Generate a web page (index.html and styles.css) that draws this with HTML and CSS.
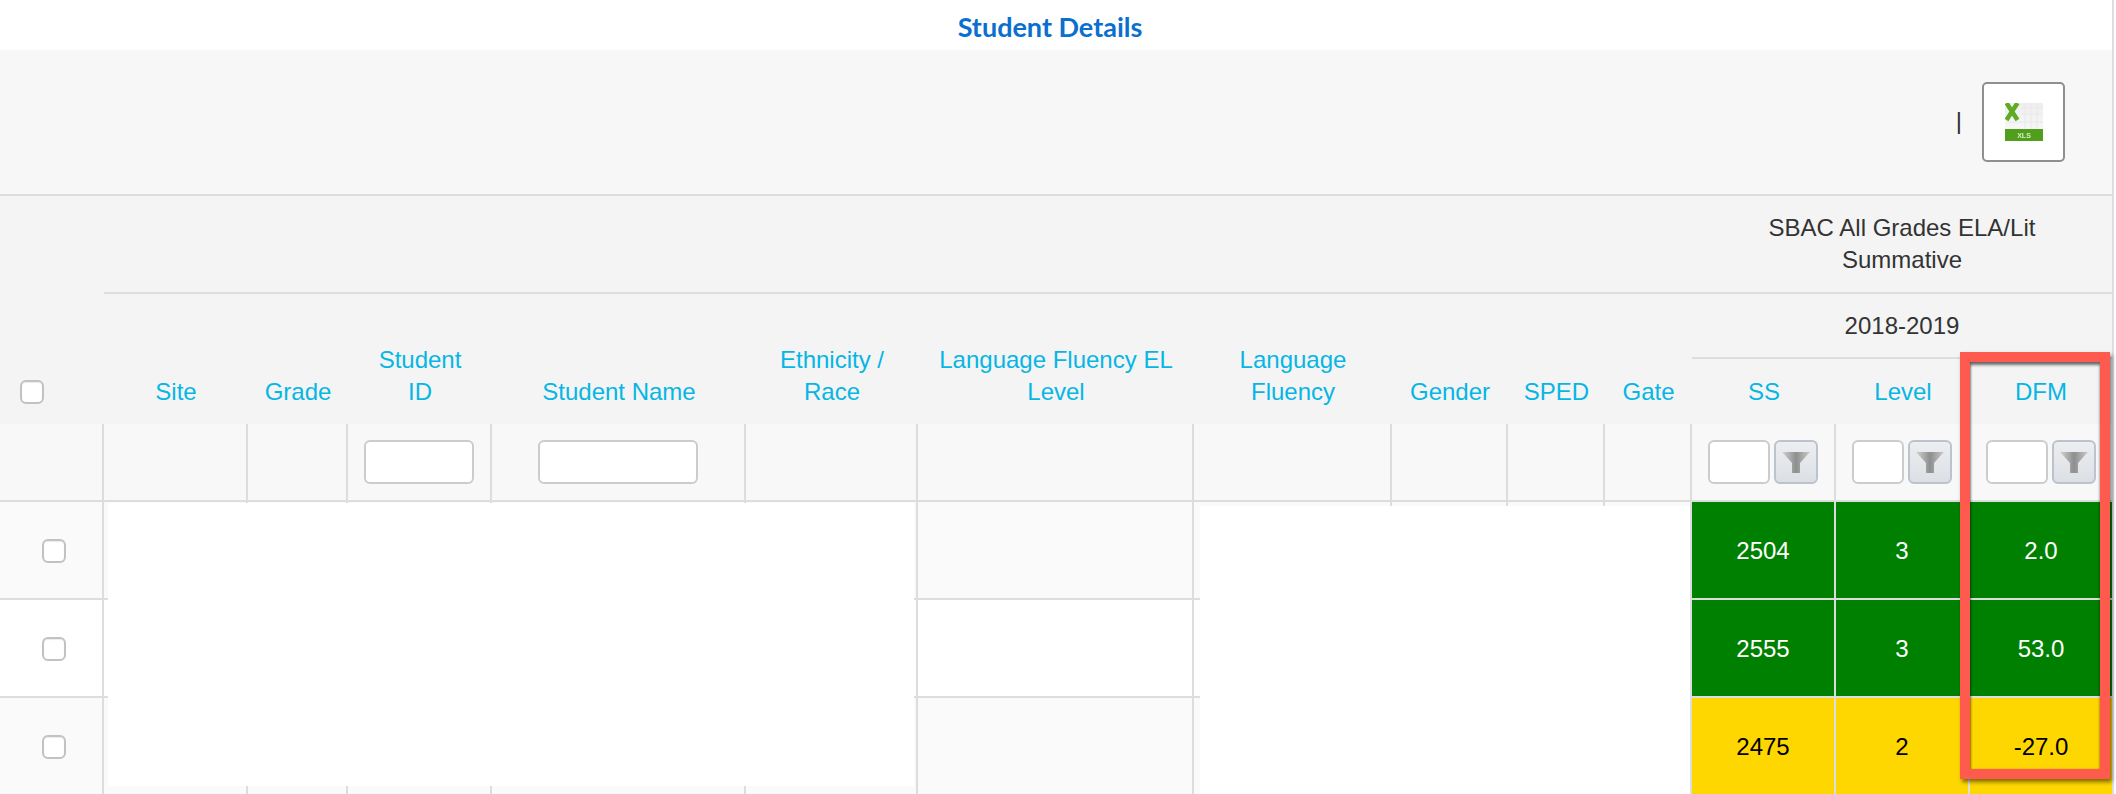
FILE: index.html
```html
<!DOCTYPE html>
<html lang="en">
<head>
<meta charset="utf-8">
<title>Student Details</title>
<link rel="stylesheet" href="styles.css">
</head>
<body>
<div class="page">
  <h1 class="title">Student Details</h1>
  <div class="toolbar">
    <span class="sep">|</span>
    <button class="export" type="button" aria-label="Export to Excel">
      <svg class="xls" width="38" height="38" viewBox="0 0 38 38">
        <defs>
          <linearGradient id="sheet" x1="0" y1="0" x2="0" y2="1">
            <stop offset="0" stop-color="#eeeeee"/>
            <stop offset="1" stop-color="#fbfbfb"/>
          </linearGradient>
        </defs>
        <rect width="38" height="38" fill="url(#sheet)"/>
        <path d="M16 5H38M16 11H38M2 19H38M20 0V26M26 0V26M32 0V26" stroke="#e8e8e8" stroke-width="1"/>
        <rect y="26" width="38" height="12" fill="#4f9e1c"/>
        <path d="M1.5 0L12.5 17M12.5 0L1.5 17" stroke="#5fac23" stroke-width="4.5" fill="none"/>
        <text x="19" y="35" class="xls-label">XLS</text>
      </svg>
    </button>
  </div>
  <table class="grid">
    <colgroup>
      <col class="c0"><col class="c1"><col class="c2"><col class="c3"><col class="c4"><col class="c5"><col class="c6">
      <col class="c7"><col class="c8"><col class="c9"><col class="c10"><col class="c11"><col class="c12"><col class="c13">
    </colgroup>
    <thead>
      <tr class="h-a">
        <th class="sel" rowspan="3"><input type="checkbox" class="check" aria-label="Select all"></th>
        <th class="blank" colspan="10"></th>
        <th class="group" colspan="3">SBAC All Grades ELA/Lit Summative</th>
      </tr>
      <tr class="h-b">
        <th class="col" rowspan="2">Site</th>
        <th class="col" rowspan="2">Grade</th>
        <th class="col" rowspan="2">Student<br>ID</th>
        <th class="col" rowspan="2">Student Name</th>
        <th class="col" rowspan="2">Ethnicity /<br>Race</th>
        <th class="col" rowspan="2">Language Fluency EL<br>Level</th>
        <th class="col" rowspan="2">Language<br>Fluency</th>
        <th class="col" rowspan="2">Gender</th>
        <th class="col" rowspan="2">SPED</th>
        <th class="col" rowspan="2">Gate</th>
        <th class="group" colspan="3">2018-2019</th>
      </tr>
      <tr class="h-c">
        <th class="col mid">SS</th>
        <th class="col mid">Level</th>
        <th class="col mid">DFM</th>
      </tr>
      <tr class="filters">
        <td></td><td></td><td></td>
        <td><input class="field" type="text" aria-label="Student ID filter"></td>
        <td><input class="field wide" type="text" aria-label="Student name filter"></td>
        <td></td><td></td><td></td><td></td><td></td><td></td>
        <td>
          <div class="filter">
            <input class="field ss" type="text" aria-label="SS filter">
            <button class="funnel" type="button" aria-label="Filter SS"><svg width="28" height="22" viewBox="0 0 28 22"><use href="#funnel"/></svg></button>
          </div>
        </td>
        <td>
          <div class="filter">
            <input class="field lv" type="text" aria-label="Level filter">
            <button class="funnel" type="button" aria-label="Filter Level"><svg width="28" height="22" viewBox="0 0 28 22"><use href="#funnel"/></svg></button>
          </div>
        </td>
        <td>
          <div class="filter">
            <input class="field ss" type="text" aria-label="DFM filter">
            <button class="funnel" type="button" aria-label="Filter DFM"><svg width="28" height="22" viewBox="0 0 28 22"><use href="#funnel"/></svg></button>
          </div>
        </td>
      </tr>
    </thead>
    <tbody>
      <tr>
        <td class="pick"><input type="checkbox" class="check" aria-label="Select row"></td>
        <td></td><td></td><td></td><td></td><td></td><td></td><td></td><td></td><td></td><td></td>
        <td class="num good">2504</td><td class="num good">3</td><td class="num good">2.0</td>
      </tr>
      <tr>
        <td class="pick"><input type="checkbox" class="check" aria-label="Select row"></td>
        <td></td><td></td><td></td><td></td><td></td><td></td><td></td><td></td><td></td><td></td>
        <td class="num good">2555</td><td class="num good">3</td><td class="num good">53.0</td>
      </tr>
      <tr>
        <td class="pick"><input type="checkbox" class="check" aria-label="Select row"></td>
        <td></td><td></td><td></td><td></td><td></td><td></td><td></td><td></td><td></td><td></td>
        <td class="num warn">2475</td><td class="num warn">2</td><td class="num warn">-27.0</td>
      </tr>
    </tbody>
  </table>
  <div class="mask mask-a"></div>
  <div class="mask mask-b"></div>
  <div class="callout"></div>
</div>
<svg class="defs" width="0" height="0">
  <defs>
    <linearGradient id="fg" x1="0" y1="0" x2="1" y2="0">
      <stop offset="0" stop-color="#d2d2d2"/>
      <stop offset="0.5" stop-color="#8e8e8e"/>
      <stop offset="1" stop-color="#cacaca"/>
    </linearGradient>
    <symbol id="funnel" viewBox="0 0 28 22">
      <polygon points="0,1 28,1 18,12 18,22 10,22 10,12" fill="url(#fg)"/>
    </symbol>
  </defs>
</svg>
</body>
</html>
```
FILE: styles.css
```css
html, body {
  margin: 0;
  padding: 0;
  background: #fff;
  height: 794px;
  overflow: hidden;
}

body {
  font-family: "Liberation Sans", Arial, sans-serif;
  font-size: 24px;
  line-height: 32px;
  color: #333;
}

.page {
  position: relative;
  width: 2112px;
  border-right: 2px solid #ddd;
}

.title {
  margin: 0;
  box-sizing: border-box;
  height: 50px;
  padding: 4px 12px 0 0;
  display: flex;
  align-items: center;
  justify-content: center;
  font-family: "Lato", sans-serif;
  font-size: 27px;
  font-weight: 700;
  color: #0a6fcf;
  background: #fff;
}

.toolbar {
  height: 144px;
  padding-right: 47px;
  display: flex;
  align-items: center;
  justify-content: flex-end;
  background: #f7f7f7;
  border-bottom: 2px solid #ddd;
}

.sep {
  margin: 0 20px 2px 0;
}

.export {
  width: 83px;
  height: 80px;
  padding: 0;
  display: flex;
  align-items: center;
  justify-content: center;
  background: #fff;
  border: 2px solid #8f8f8f;
  border-radius: 5px;
}

.xls {
  filter: blur(0.4px);
}

.xls-label {
  font-family: "Liberation Sans", sans-serif;
  font-size: 7px;
  font-weight: 700;
  fill: #d8ecc8;
  text-anchor: middle;
}

.grid {
  width: 2112px;
  table-layout: fixed;
  border-collapse: separate;
  border-spacing: 0;
}

.c0 { width: 104px; }
.c1 { width: 144px; }
.c2 { width: 100px; }
.c3 { width: 144px; }
.c4 { width: 254px; }
.c5 { width: 172px; }
.c6 { width: 276px; }
.c7 { width: 198px; }
.c8 { width: 116px; }
.c9 { width: 97px; }
.c10 { width: 87px; }
.c11 { width: 144px; }
.c12 { width: 134px; }
.c13 { width: 142px; }

.grid th,
.grid td {
  box-sizing: border-box;
  padding: 0;
  text-align: center;
}

.grid thead th {
  font-weight: 400;
  background: #f4f4f4;
}

.h-a { height: 98px; }
.h-b { height: 65px; }
.h-c { height: 65px; }
.filters { height: 78px; }
.grid tbody tr { height: 98px; }

.blank {
  border-bottom: 2px solid #ddd;
}

.group {
  padding: 0 20px !important;
  border-bottom: 2px solid #ddd;
}

.h-a .group {
  padding: 0 44px !important;
}

.sel {
  vertical-align: bottom;
  text-align: left !important;
  padding: 0 0 20px 20px !important;
}

.col {
  vertical-align: bottom;
  padding-bottom: 16px !important;
  color: #06b6e4;
}

.col.mid {
  vertical-align: middle;
  padding-bottom: 0 !important;
}

.filters td {
  background: #f8f8f8;
  border-right: 2px solid #ddd;
  border-bottom: 2px solid #ddd;
  vertical-align: middle;
}

.filters td:last-child {
  border-right: 0;
}

.grid tbody td {
  padding-top: 2px;
  border-right: 2px solid #ddd;
  border-bottom: 2px solid #ddd;
  background: #fff;
  vertical-align: middle;
}

.grid tbody tr:nth-child(odd) td {
  background: #fafafa;
}

.grid tbody td:last-child {
  border-right: 0;
}

.pick {
  text-align: left !important;
  padding-left: 42px !important;
}

.check {
  appearance: none;
  display: block;
  box-sizing: border-box;
  width: 24px;
  height: 24px;
  margin: 0;
  background: #fff;
  border: 2px solid #c2c2c2;
  border-radius: 6px;
  box-shadow: inset 0 1px 1px rgba(0, 0, 0, 0.08);
}

.field {
  display: block;
  box-sizing: border-box;
  width: 110px;
  height: 44px;
  margin: 0 auto;
  padding: 0;
  background: #fff;
  border: 2px solid #ccc;
  border-radius: 6px;
}

.field.wide { width: 160px; }
.field.ss { width: 62px; margin: 0; }
.field.lv { width: 52px; margin: 0; }

.filter {
  display: flex;
  justify-content: center;
  gap: 4px;
}

.funnel {
  box-sizing: border-box;
  width: 44px;
  height: 44px;
  padding: 0;
  display: flex;
  align-items: center;
  justify-content: center;
  background: linear-gradient(#eceef1, #dcdfe4);
  border: 2px solid #bcc3cd;
  border-radius: 6px;
}

.num.good {
  background: #008000 !important;
  color: #fff;
}

.num.warn {
  background: #ffd700 !important;
  color: #000;
}

.mask {
  position: absolute;
  background: #fff;
}

.mask-a {
  left: 108px;
  top: 503px;
  width: 806px;
  height: 283px;
}

.mask-b {
  left: 1200px;
  top: 506px;
  width: 490px;
  height: 288px;
}

.callout {
  position: absolute;
  box-sizing: border-box;
  left: 1960px;
  top: 352px;
  width: 150px;
  height: 427px;
  border: 10px solid #fe5a4e;
  box-shadow: 2px 3px 4px rgba(0, 0, 0, 0.5), inset 0 3px 3px rgba(0, 0, 0, 0.55), inset 1px 0 2px rgba(0, 0, 0, 0.25);
}

.defs {
  position: absolute;
}
```
